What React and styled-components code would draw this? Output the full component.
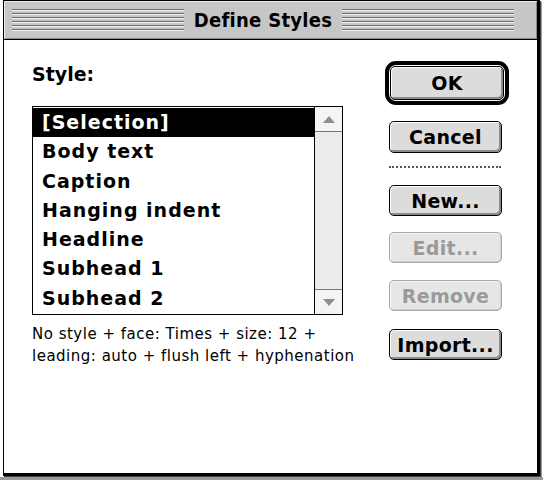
import React from "react";
import styled, { createGlobalStyle, css } from "styled-components";

const chicago = `"DejaVu Sans", "Liberation Sans", sans-serif`;
const chicagoNarrow = `"DejaVu Sans Condensed", "DejaVu Sans", sans-serif`;
const geneva = `"DejaVu Sans", "Liberation Sans", sans-serif`;

const GlobalStyle = createGlobalStyle`
	html, body {
		margin: 0;
		padding: 0;
		background: #fff;
	}
	body {
		width: 543px;
		height: 480px;
		overflow: hidden;
	}
`;

const Page = styled.div`
	padding-left: 3px;
	width: 543px;
	height: 480px;
	box-sizing: border-box;
	background: linear-gradient(to bottom, #fff 0, #fff 477px, #9a9a9a 477px);
`;

const Window = styled.div`
	width: 533px;
	height: 472px;
	border: 1px solid #000;
	border-right-width: 3px;
	border-bottom-width: 3px;
	box-shadow: 1px 1px 0 #444, 2px 2px 0 #999;
	background: #fff;
	display: flex;
	flex-direction: column;
`;

const TitleBar = styled.div`
	height: 38px;
	background: #c6c6c6;
	border-bottom: 1px solid #000;
	box-shadow: inset 1px 1px 0 #eee, inset -1px -1px 0 #8a8a8a;
	display: flex;
	align-items: center;
	padding: 0 23px 0 8px;
	gap: 6px;
`;

const Stripes = styled.div`
	flex: 1;
	height: 23px;
	background: repeating-linear-gradient(
		to bottom,
		#6e6e6e 0,
		#6e6e6e 1px,
		#f2f2f2 1px,
		#f2f2f2 2px,
		#c6c6c6 2px,
		#c6c6c6 4px
	);
`;

const Title = styled.div`
	font-family: ${chicagoNarrow};
	font-weight: bold;
	font-size: 20px;
	color: #000;
	padding: 0 4px;
	letter-spacing: 0.3px;
`;

const Content = styled.div`
	flex: 1;
	display: flex;
	padding: 21px 0 0 28px;
	gap: 42px;
`;

const LeftColumn = styled.div`
	width: 311px;
	display: flex;
	flex-direction: column;
`;

const Label = styled.div`
	font-family: ${chicago};
	font-weight: bold;
	font-size: 19px;
	line-height: 24px;
	color: #000;
	margin-top: 1px;
	margin-bottom: 20px;
`;

const ListBox = styled.div`
	height: 207px;
	border: 1px solid #000;
	display: flex;
`;

const Rows = styled.div`
	flex: 1;
	padding-top: 1px;
`;

const Row = styled.div`
	height: 29.3px;
	line-height: 29px;
	padding-left: 9px;
	font-family: ${chicago};
	font-weight: bold;
	font-size: 19px;
	letter-spacing: 1px;
	white-space: nowrap;
	color: ${p => (p.selected ? "#fff" : "#000")};
	background: ${p => (p.selected ? "#000" : "transparent")};
`;

const ScrollBar = styled.div`
	width: 27px;
	border-left: 1px solid #000;
	background: #ececec;
	display: flex;
	flex-direction: column;
	justify-content: space-between;
`;

const Arrow = styled.div`
	height: 24px;
	display: flex;
	align-items: center;
	justify-content: center;
	background: #f4f4f4;
	${p =>
		p.down
			? css`
					border-top: 1px solid #777;
			  `
			: css`
					border-bottom: 1px solid #777;
			  `}
`;

const Description = styled.div`
	margin-top: 8px;
	font-family: ${geneva};
	font-size: 15px;
	line-height: 22px;
	letter-spacing: 0.5px;
	white-space: nowrap;
	color: #000;
`;

const RightColumn = styled.div`
	width: 125px;
	display: flex;
	flex-direction: column;
	align-items: flex-start;
`;

const DefaultRing = styled.div`
	border: 4px solid #000;
	border-radius: 11px;
	padding: 1px;
	margin-bottom: 16px;
`;

const Button = styled.button`
	width: ${p => (p.inner ? "114px" : "113px")};
	height: ${p => p.h || "31px"};
	margin-left: ${p => (p.inner ? "0" : "4px")};
	padding: 0;
	border: 1px solid ${p => (p.disabled ? "#a8a8a8" : "#000")};
	border-radius: 5px;
	background: ${p => (p.disabled ? "#e6e6e6" : "#dcdcdc")};
	box-shadow: ${p =>
		p.disabled
			? "inset 1px 1px 0 #f6f6f6, inset -1px -1px 0 #cfcfcf"
			: "inset 1px 1px 0 #fff, inset -2px -2px 0 #8c8c8c"};
	font-family: ${chicago};
	font-weight: bold;
	font-size: 19px;
	letter-spacing: 0.3px;
	color: ${p => (p.disabled ? "#9a9a9a" : "#000")};
	margin-bottom: ${p => p.gap || "0"};
	cursor: default;
`;

const Separator = styled.div`
	width: 112px;
	margin: 0 0 17px 4px;
	border-top: 2px dotted #555;
`;

const Triangle = ({ down }) => (
	<svg width="12" height="7" viewBox="0 0 12 7">
		<polygon
			points={down ? "0,0 12,0 6,7" : "0,7 12,7 6,0"}
			fill="#8e8e8e"
		/>
	</svg>
);

const styles = [
	"[Selection]",
	"Body text",
	"Caption",
	"Hanging indent",
	"Headline",
	"Subhead 1",
	"Subhead 2"
];

export default function App() {
	return (
		<>
			<GlobalStyle />
			<Page>
				<Window>
					<TitleBar>
						<Stripes />
						<Title>Define Styles</Title>
						<Stripes />
					</TitleBar>
					<Content>
						<LeftColumn>
							<Label>Style:</Label>
							<ListBox>
								<Rows>
									{styles.map((s, i) => (
										<Row key={s} selected={i === 0}>
											{s}
										</Row>
									))}
								</Rows>
								<ScrollBar>
									<Arrow>
										<Triangle />
									</Arrow>
									<Arrow down>
										<Triangle down />
									</Arrow>
								</ScrollBar>
							</ListBox>
							<Description>
								No style + face: Times + size: 12 +
								<br />
								leading: auto + flush left + hyphenation
							</Description>
						</LeftColumn>
						<RightColumn>
							<DefaultRing>
								<Button inner h="34px">
									OK
								</Button>
							</DefaultRing>
							<Button h="32px" gap="13px">
								Cancel
							</Button>
							<Separator />
							<Button gap="16px">New...</Button>
							<Button disabled gap="17px">
								Edit...
							</Button>
							<Button disabled gap="18px">
								Remove
							</Button>
							<Button>Import...</Button>
						</RightColumn>
					</Content>
				</Window>
			</Page>
		</>
	);
}
